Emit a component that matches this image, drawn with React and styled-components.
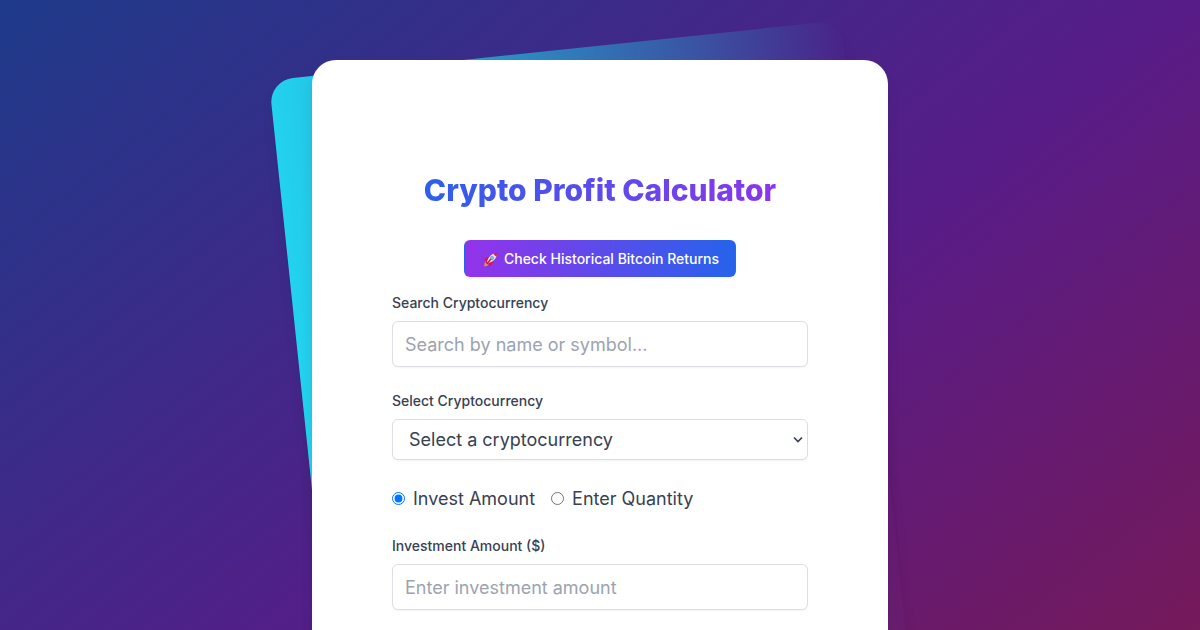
import React, { useState } from "react";
import styled, { createGlobalStyle } from "styled-components";

const GlobalStyle = createGlobalStyle`
  *, *::before, *::after { box-sizing: border-box; }
  body {
    margin: 0;
    font-family: Inter, "Noto Sans", "Liberation Sans", sans-serif;
    color: #374151;
  }
  button, input, select { font: inherit; color: inherit; margin: 0; }
`;

const Page = styled.main`
  min-height: 100vh;
  padding: 48px 0;
  overflow: hidden;
  background: linear-gradient(to bottom right, #1e3a8a, #581c87, #831843);
`;

const Stage = styled.div`
  position: relative;
  max-width: 576px;
  margin: 0 auto;
  padding: 12px 0;
`;

const TiltedPanel = styled.div`
  position: absolute;
  inset: 0;
  border-radius: 24px;
  background: linear-gradient(to right, #22d3ee, rgba(34, 211, 238, 0));
  box-shadow: 0 10px 15px -3px rgba(0, 0, 0, 0.1), 0 4px 6px -4px rgba(0, 0, 0, 0.1);
  transform: rotate(-6deg);
`;

const Card = styled.section`
  position: relative;
  padding: 112px 80px 280px;
  border-radius: 24px;
  background: #fff;
  box-shadow: 0 10px 15px -3px rgba(0, 0, 0, 0.1), 0 4px 6px -4px rgba(0, 0, 0, 0.1);
  font-size: 18px;
  line-height: 28px;
`;

const Title = styled.h1`
  margin: 0 0 32px;
  font-size: 30px;
  line-height: 36px;
  font-weight: 800;
  text-align: center;
  color: transparent;
  background: linear-gradient(to right, #2563eb, #9333ea);
  background-clip: text;
`;

const Actions = styled.div`
  display: flex;
  justify-content: center;
  margin-bottom: 16px;
`;

const HistoryButton = styled.button`
  display: flex;
  align-items: center;
  gap: 6px;
  padding: 8px 16px 7px 18px;
  border: 1px solid transparent;
  border-radius: 6px;
  background: linear-gradient(to right, #9333ea, #2563eb);
  box-shadow: 0 1px 2px rgba(0, 0, 0, 0.05);
  color: #fff;
  font-size: 14px;
  line-height: 20px;
  font-weight: 500;
  cursor: pointer;
`;

const RocketIcon = styled.svg`
  display: block;
  width: 15px;
  height: 15px;
`;

const Form = styled.form`
  display: flex;
  flex-direction: column;
  gap: 24px;
`;

const Field = styled.div`
  display: flex;
  flex-direction: column;
  gap: 8px;
`;

const Label = styled.label`
  font-size: 14px;
  line-height: 20px;
  font-weight: 500;
`;

const TextInput = styled.input`
  width: 100%;
  padding: 9px 12px 7px;
  border: 1px solid #dcdee3;
  border-radius: 6px;
  background: #fff;
  box-shadow: 0 1px 2px rgba(0, 0, 0, 0.05);
  &::placeholder { color: #9ca3af; opacity: 1; }
`;

const SelectBox = styled.div`
  display: grid;
  align-items: center;
  > * { grid-area: 1 / 1; }
`;

const Select = styled.select`
  appearance: none;
  width: 100%;
  height: 41px;
  padding: 0 32px 0 16px;
  border: 1px solid #dcdee3;
  border-radius: 6px;
  background: #fff;
  box-shadow: 0 1px 2px rgba(0, 0, 0, 0.05);
`;

const Chevron = styled.svg`
  justify-self: end;
  width: 10px;
  height: 7px;
  margin-right: 5px;
  pointer-events: none;
`;

const RadioRow = styled.div`
  display: flex;
  gap: 16px;
`;

const RadioLabel = styled.label`
  display: flex;
  align-items: center;
  gap: 8px;
`;

const RadioText = styled.span`
  padding-top: 2px;
  line-height: 26px;
`;

const modes = [
  { id: "amount", label: "Invest Amount" },
  { id: "quantity", label: "Enter Quantity" },
];

export default function App() {
  const [mode, setMode] = useState("amount");
  return (
    <>
      <GlobalStyle />
      <Page>
        <Stage>
          <TiltedPanel />
          <Card>
            <Title>Crypto Profit Calculator</Title>
            <Actions>
              <HistoryButton type="button">
                <RocketIcon viewBox="0 0 30 30" aria-hidden="true">
                  <path d="M4 19l4 1 3 3-1 4-8 2z" fill="#f7894a" />
                  <path d="M12 9L5 12l-3 7 7-2zM21 18l-3 7-7 4 2-8z" fill="#d8173f" />
                  <path d="M8 20C10 10 17 3 28 2c0 11-8 18-18 20z" fill="#e6e4ee" />
                  <path d="M21 3c2-1 5-1 7-1 0 3 0 5-1 7-3-1-5-3-6-6z" fill="#e01b40" />
                  <path d="M7 19l4 4-2 2-4-4z" fill="#c2143a" />
                  <circle cx="18" cy="12" r="4" fill="#8a94b5" />
                  <circle cx="18" cy="12" r="2" fill="#72c6ef" />
                  <path d="M15 15l-5 6" stroke="#d8173f" strokeWidth="3" strokeLinecap="round" />
                </RocketIcon>
                <span>Check Historical Bitcoin Returns</span>
              </HistoryButton>
            </Actions>
            <Form>
              <Field>
                <Label htmlFor="search">Search Cryptocurrency</Label>
                <TextInput id="search" type="text" placeholder="Search by name or symbol..." />
              </Field>
              <Field>
                <Label htmlFor="coin">Select Cryptocurrency</Label>
                <SelectBox>
                  <Select id="coin">
                    <option>Select a cryptocurrency</option>
                  </Select>
                  <Chevron viewBox="0 0 10 7" aria-hidden="true">
                    <path d="M1 1.5l4 4 4-4" fill="none" stroke="#374151" strokeWidth="1.7" />
                  </Chevron>
                </SelectBox>
              </Field>
              <RadioRow>
                {modes.map((m) => (
                  <RadioLabel key={m.id}>
                    <input
                      type="radio"
                      name="mode"
                      checked={mode === m.id}
                      onChange={() => setMode(m.id)}
                    />
                    <RadioText>{m.label}</RadioText>
                  </RadioLabel>
                ))}
              </RadioRow>
              <Field>
                <Label htmlFor="amount">Investment Amount ($)</Label>
                <TextInput id="amount" type="text" placeholder="Enter investment amount" />
              </Field>
            </Form>
          </Card>
        </Stage>
      </Page>
    </>
  );
}
